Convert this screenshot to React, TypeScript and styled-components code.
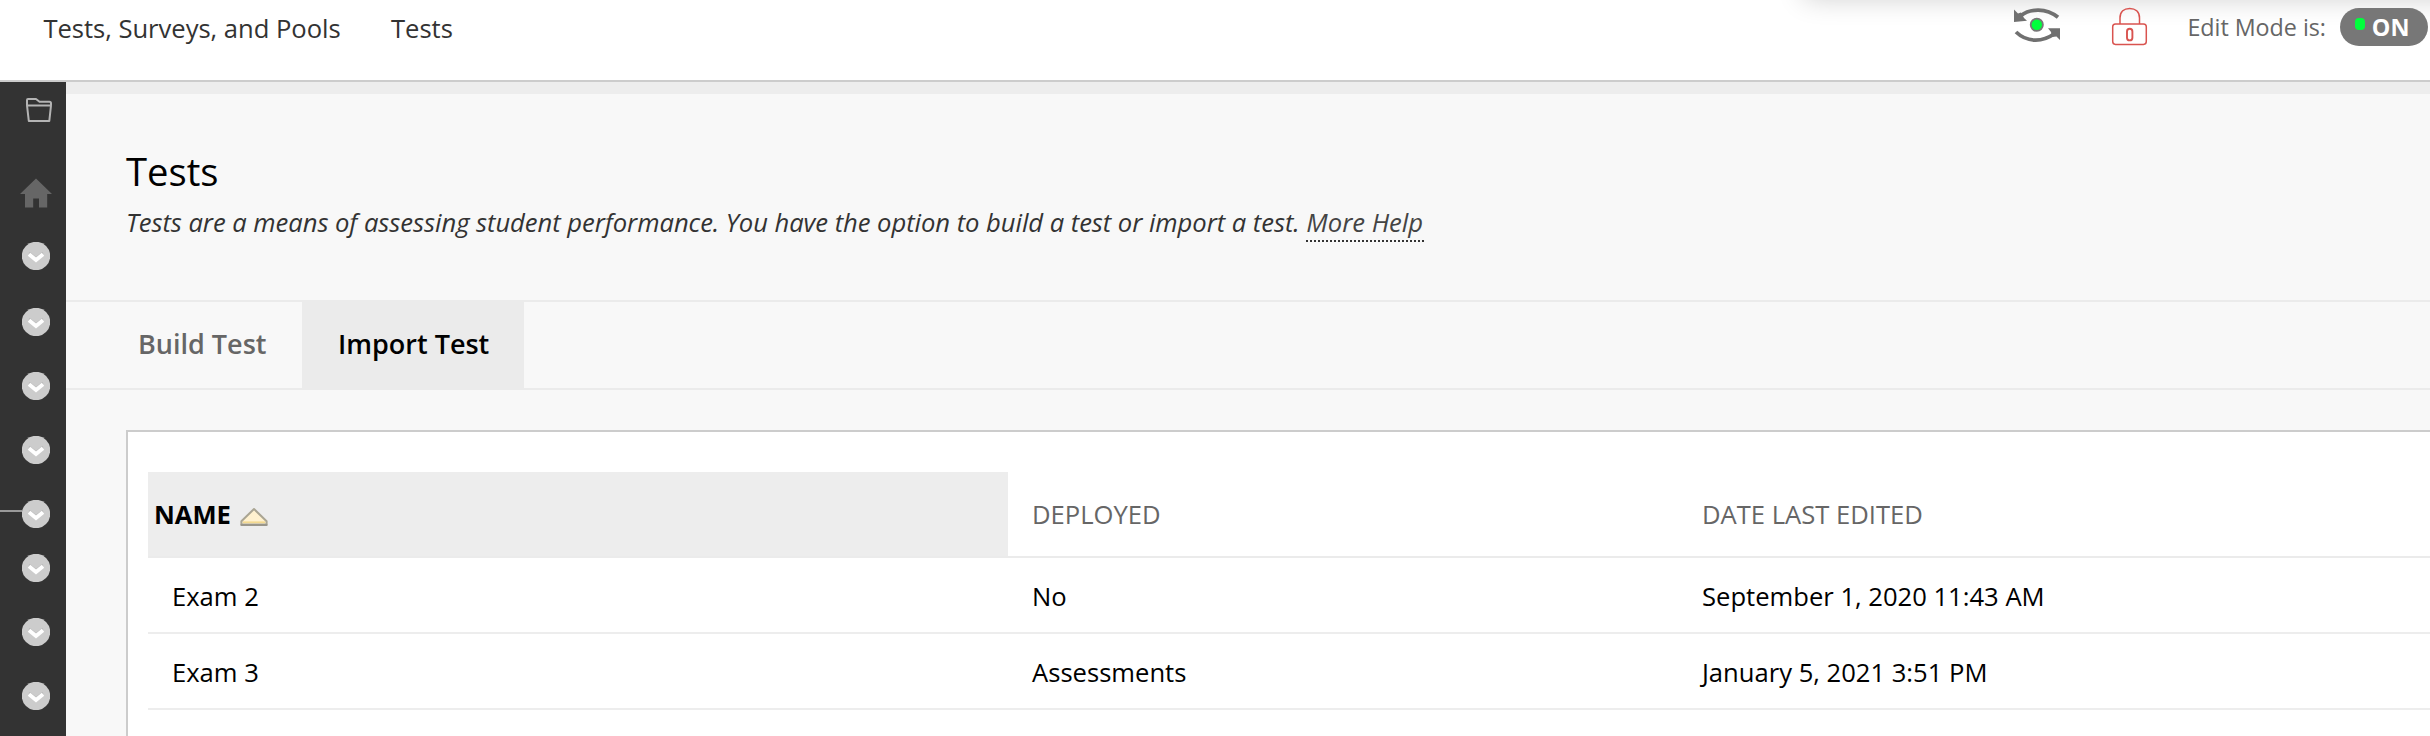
import React from "react";
import styled, { createGlobalStyle } from "styled-components";

const GlobalStyle = createGlobalStyle`
  *, *::before, *::after { box-sizing: border-box; }
  html, body { margin: 0; height: 100%; overflow: hidden; background: #f8f8f8; }
  body {
    font-family: "Open Sans", "Liberation Sans", sans-serif;
    font-size: 25.6px;
    color: #000;
  }
`;

const Page = styled.div`
  display: flex;
  flex-direction: column;
  height: 100vh;
  overflow: hidden;
`;

/* ---------- top bar ---------- */

const TopBar = styled.header`
  position: relative;
  display: flex;
  justify-content: space-between;
  align-items: flex-start;
  flex: none;
  height: 82px;
  padding: 0 2px 0 43.4px;
  border-bottom: 2px solid #ccc;
  background: #fff;
  overflow: hidden;
`;

const PanelShadow = styled.div`
  position: absolute;
  top: -40px;
  left: 1804px;
  right: -60px;
  height: 36px;
  box-shadow: 0 2px 28px rgba(0, 0, 0, 0.2);
`;

const Breadcrumbs = styled.nav`
  display: flex;
  gap: 50.4px;
`;

const Crumb = styled.a`
  line-height: 58px;
  letter-spacing: -0.03px;
  color: #333;
`;

const Tools = styled.div`
  position: relative;
  display: flex;
  align-items: flex-start;
`;

const RefreshIcon = styled.svg`
  width: 46px;
  height: 36px;
  margin: 7px 51px 0 0;
`;

const LockIcon = styled.svg`
  width: 38px;
  height: 39px;
  margin: 7px 38.4px 0 0;
`;

const ModeLabel = styled.span`
  width: 152.6px;
  font-size: 23.3px;
  line-height: 54px;
  letter-spacing: -0.03px;
  white-space: nowrap;
  color: #666;
`;

const ModeToggle = styled.button`
  display: flex;
  width: 88px;
  height: 38px;
  margin-top: 8px;
  padding: 0 0 0 15px;
  border: 0;
  border-radius: 19px;
  background: #777;
  color: #fff;
  font: bold 23.4px/38px "Open Sans", "Liberation Sans", sans-serif;
`;

const ModeDot = styled.span`
  width: 10px;
  height: 12px;
  margin: 9.6px 6.8px 0 0;
  border-radius: 4px;
  background: #00ff3c;
`;

/* ---------- body ---------- */

const Body = styled.div`
  display: flex;
  flex: 1;
  min-height: 0;
`;

const Sidebar = styled.aside`
  display: flex;
  flex-direction: column;
  flex: none;
  width: 66px;
  background: #333;
`;

const FolderIcon = styled.svg`
  flex: none;
  width: 28px;
  height: 26px;
  margin: 15px 0 0 25px;
`;

const HomeIcon = styled.svg`
  flex: none;
  width: 32px;
  height: 30px;
  margin: 55px 0 0 20.4px;
`;

const SidebarItem = styled.div<{ $gap: number }>`
  display: flex;
  flex: none;
  height: 28px;
  margin-top: ${(p) => p.$gap}px;
`;

const Connector = styled.span<{ $line?: boolean }>`
  width: 22px;
  height: 2px;
  margin-top: 10px;
  background: ${(p) => (p.$line ? "#999" : "transparent")};
`;

const ChevronBadge = styled.svg`
  width: 28px;
  height: 28px;
`;

const Main = styled.main`
  flex: 1;
  min-width: 0;
  border-top: 12px solid #ededed;
  background: #f8f8f8;
`;

const Intro = styled.section`
  height: 206px;
  padding: 51px 0 0 60px;
`;

const Title = styled.h1`
  margin: 0;
  font-size: 38.2px;
  font-weight: 400;
  line-height: 52px;
`;

const Description = styled.p`
  margin: 8px 0 0;
  font-style: italic;
  line-height: 36px;
  letter-spacing: -0.04px;
  white-space: nowrap;
  color: #333;
`;

const HelpLink = styled.a`
  padding-right: 1px;
  border-bottom: 2px dotted #333;
  letter-spacing: 0;
  color: #444;
`;

const Tabs = styled.div`
  display: flex;
  height: 90px;
  padding-left: 36px;
  border-top: 2px solid #ebebeb;
  border-bottom: 2px solid #ebebeb;
`;

const Tab = styled.button<{ $active?: boolean; $width: number }>`
  width: ${(p) => p.$width}px;
  height: 86px;
  padding: 0 0 3px 36px;
  border: 0;
  background: ${(p) => (p.$active ? "#ebebeb" : "transparent")};
  color: ${(p) => (p.$active ? "#000" : "#666")};
  font: 600 27px/83px "Open Sans", "Liberation Sans", sans-serif;
  text-align: left;
  white-space: nowrap;
`;

const Card = styled.section`
  height: 400px;
  margin: 40px 0 0 60px;
  padding: 40px 0 0 20px;
  border: solid #ccc;
  border-width: 2px 0 0 2px;
  background: #fff;
`;

const Row = styled.div`
  display: grid;
  grid-template-columns: 860px 670px 1fr;
  height: 76px;
  border-bottom: 2px solid #ededed;
`;

const HeadRow = styled(Row)`
  height: 86px;
  border-bottom-color: #ebebeb;
`;

const HeadCell = styled.div<{ $sorted?: boolean }>`
  display: flex;
  height: 84px;
  padding: 1px 0 0 ${(p) => (p.$sorted ? 6 : 24)}px;
  background: ${(p) => (p.$sorted ? "#ededed" : "transparent")};
  color: ${(p) => (p.$sorted ? "#000" : "#666")};
  font-weight: ${(p) => (p.$sorted ? 700 : 400)};
  line-height: 84px;
`;

const SortIcon = styled.svg`
  width: 30px;
  height: 20px;
  margin: 34px 0 0 8px;
`;

const Cell = styled.div`
  padding: 2px 0 0 24px;
  line-height: 74px;
  height: 74px;
`;

const badgeGaps = [34, 38, 36, 36, 36, 26, 36, 36];

const tests = [
  { name: "Exam 2", deployed: "No", edited: "September 1, 2020 11:43 AM" },
  { name: "Exam 3", deployed: "Assessments", edited: "January 5, 2021 3:51 PM" },
];

export default function App() {
  return (
    <Page>
      <GlobalStyle />
      <TopBar>
        <PanelShadow />
        <Breadcrumbs>
          <Crumb>Tests, Surveys, and Pools</Crumb>
          <Crumb>Tests</Crumb>
        </Breadcrumbs>
        <Tools>
          <RefreshIcon viewBox="0 0 46 36" fill="none">
            <path d="M7 8.5C16 1.5 32 .5 44 10.3" stroke="#707070" strokeWidth="3.8" />
            <path d="M0 2.5L4 6.5L7 5.5L10 11L13 13.8L0 15Z" fill="#707070" />
            <path d="M2 25C13 35.5 28 35.5 40 27" stroke="#707070" strokeWidth="3.8" />
            <path d="M34 21.3H46V33L42.5 29.5L38 30L37 25Z" fill="#707070" />
            <circle cx="22.8" cy="17.8" r="6.1" fill="#00ff3c" stroke="#777" strokeWidth="1.8" />
          </RefreshIcon>
          <LockIcon viewBox="0 0 38 39" fill="none" stroke="#d9534f" strokeWidth="1.5">
            <path d="M9 17V11C9 4.8 13 1.4 18.7 1.4S28.5 4.8 28.5 11V17" />
            <rect x="1.7" y="17" width="33.6" height="20.4" rx="2.8" />
            <rect x="16" y="21.8" width="5.4" height="11.6" rx="2.7" strokeWidth="1.9" />
          </LockIcon>
          <ModeLabel>Edit Mode is:</ModeLabel>
          <ModeToggle>
            <ModeDot />
            ON
          </ModeToggle>
        </Tools>
      </TopBar>
      <Body>
        <Sidebar>
          <FolderIcon viewBox="0 0 28 26" fill="none" stroke="#b4b4b4" strokeWidth="2" strokeLinejoin="round">
            <path d="M2 8V3Q2 2 3 2H11L14.5 4.8H24.5Q26 4.8 26 6.5V8" />
            <path d="M2 8.4H26L24.3 24H3.8Z" />
          </FolderIcon>
          <HomeIcon viewBox="0 0 32 30" fill="#666">
            <path d="M16 0.4L32 16H27.2V29.6H19V20.5H13.2V29.6H5V16H0Z" />
          </HomeIcon>
          {badgeGaps.map((gap, i) => (
            <SidebarItem key={i} $gap={gap}>
              <Connector $line={i === 4} />
              <ChevronBadge viewBox="0 0 28 28" fill="none">
                <circle cx="14" cy="14" r="14.2" fill="#ccc" />
                <path d="M7 10.5L14 16L21 10.5" stroke="#bcbcbc" strokeWidth="2" />
                <path d="M7 12.2L14 18L21 12.2" stroke="#fff" strokeWidth="3.8" />
              </ChevronBadge>
            </SidebarItem>
          ))}
        </Sidebar>
        <Main>
          <Intro>
            <Title>Tests</Title>
            <Description>
              Tests are a means of assessing student performance. You have the option to build a test or import a
              test. <HelpLink>More Help</HelpLink>
            </Description>
          </Intro>
          <Tabs>
            <Tab $width={200}>Build Test</Tab>
            <Tab $width={222} $active>
              Import Test
            </Tab>
          </Tabs>
          <Card>
            <HeadRow>
              <HeadCell $sorted>
                NAME
                <SortIcon viewBox="0 0 30 20">
                  <path
                    d="M15 2L27.6 14.2V17.4H2.4V14.2Z"
                    fill="#fff1cf"
                    stroke="#aaa593"
                    strokeWidth="2"
                    strokeLinejoin="round"
                  />
                  <path d="M4 15.2H26" stroke="#f3d990" strokeWidth="1.6" />
                  <path d="M2.4 18H27.6" stroke="#99968c" strokeWidth="2" strokeLinecap="round" />
                </SortIcon>
              </HeadCell>
              <HeadCell>DEPLOYED</HeadCell>
              <HeadCell>DATE LAST EDITED</HeadCell>
            </HeadRow>
            {tests.map((t) => (
              <Row key={t.name}>
                <Cell>{t.name}</Cell>
                <Cell>{t.deployed}</Cell>
                <Cell>{t.edited}</Cell>
              </Row>
            ))}
          </Card>
        </Main>
      </Body>
    </Page>
  );
}
